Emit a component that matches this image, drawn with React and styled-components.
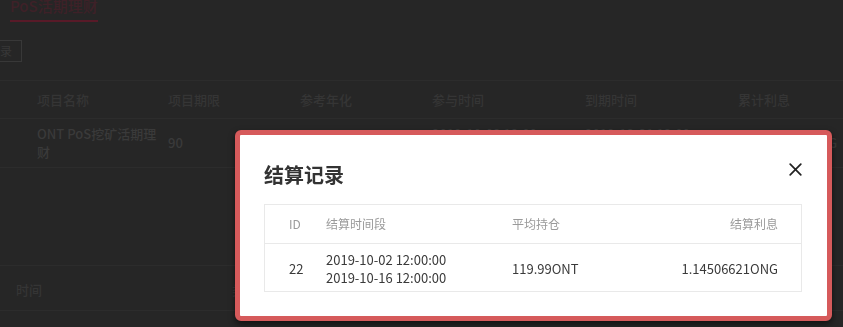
import React from "react";
import styled, { createGlobalStyle } from "styled-components";

const GlobalStyle = createGlobalStyle`
  html, body {
    margin: 0;
    padding: 0;
    background: #262626;
    overflow: hidden;
  }
  body {
    font-family: "Noto Sans CJK SC", "Noto Sans", sans-serif;
  }
`;

// dimmed page behind the dialog
const Page = styled.div`
  width: 843px;
  height: 327px;
  display: flex;
  flex-direction: column;
  background: #262626;
`;

const Title = styled.div`
  align-self: flex-start;
  margin: -3px 0 0 10px;
  padding-bottom: 5px;
  border-bottom: 2px solid #581a28;
  font-size: 15px;
  line-height: 18px;
  font-weight: 500;
  color: #3e2128;
`;

const RecordButton = styled.button`
  align-self: flex-start;
  margin: 18px 0 0 -22px;
  height: 22px;
  padding: 0 9px;
  border: 1px solid #383838;
  background: transparent;
  font-family: inherit;
  font-size: 12px;
  line-height: 20px;
  color: #383838;
`;

const Row = styled.div`
  display: grid;
  grid-template-columns: 152px 132px 132px 153px 153px 1fr;
  align-items: center;
  height: ${(p) => p.$h}px;
  border-top: ${(p) => (p.$top ? "1px solid #2c2c2c" : "none")};
  border-bottom: 1px solid #2c2c2c;
  margin-top: ${(p) => p.$mt || 0}px;
  font-size: 13px;
  line-height: 18px;
  font-weight: 500;
  color: ${(p) => (p.$head ? "#353535" : "#3a3a3a")};
`;

const Cell = styled.div`
  padding-left: 16px;
  white-space: nowrap;
  &:first-child {
    padding-left: 37px;
  }
`;

const HistoryRow = styled.div`
  display: flex;
  align-items: center;
  gap: 190px;
  height: 41px;
  margin-top: 97px;
  padding: 3px 0 0 16px;
  border-top: 1px solid #2c2c2c;
  border-bottom: 1px solid #2c2c2c;
  font-size: 13px;
  font-weight: 500;
  color: #353535;
`;

// dialog
const Dialog = styled.div`
  position: fixed;
  left: 235px;
  top: 130px;
  width: 597px;
  box-sizing: border-box;
  padding: 26px 25px 24px 24px;
  background: #fff;
  border: 5px solid #d65a5b;
  border-radius: 6px;
  box-shadow: 0 3px 6px rgba(0, 0, 0, 0.55);
`;

const DialogTitle = styled.h2`
  margin: 0 0 15px;
  font-size: 20px;
  line-height: 28px;
  font-weight: 700;
  color: #333;
`;

const CloseButton = styled.button`
  position: absolute;
  top: 28px;
  right: 25px;
  width: 13px;
  height: 13px;
  padding: 0;
  border: none;
  background: none;
  display: flex;
  cursor: pointer;
`;

const RecordTable = styled.div`
  border: 1px solid #e9e9e9;
`;

const RecordRow = styled.div`
  display: grid;
  grid-template-columns: 37px 186px 1fr auto;
  align-items: center;
  height: ${(p) => (p.$head ? 38 : 47)}px;
  padding: ${(p) => (p.$head ? "0 23px 0 24px" : "3px 23px 0 24px")};
  box-sizing: ${(p) => (p.$head ? "content-box" : "border-box")};
  border-bottom: ${(p) => (p.$head ? "1px solid #e9e9e9" : "none")};
  font-size: ${(p) => (p.$head ? 12 : 13)}px;
  line-height: 18px;
  color: ${(p) => (p.$head ? "#9a9a9a" : "#3a3a3a")};
`;

const Right = styled.div`
  text-align: right;
`;

const X = () => (
  <svg width="13" height="13" viewBox="0 0 13 13" fill="none">
    <path d="M1.2 1.2 L11.8 11.8 M11.8 1.2 L1.2 11.8" stroke="#222" strokeWidth="1.7" strokeLinecap="round" />
  </svg>
);

export default function App() {
  return (
    <>
      <GlobalStyle />
      <Page>
        <Title>PoS活期理财</Title>
        <RecordButton>记录</RecordButton>
        <Row $h={37} $top $head $mt={18}>
          <Cell>项目名称</Cell>
          <Cell>项目期限</Cell>
          <Cell>参考年化</Cell>
          <Cell>参与时间</Cell>
          <Cell>到期时间</Cell>
          <Cell>累计利息</Cell>
        </Row>
        <Row $h={48}>
          <Cell>
            ONT PoS挖矿活期理
            <br />财
          </Cell>
          <Cell>90</Cell>
          <Cell>5.00%</Cell>
          <Cell>
            2019-10-02 12:00
            <br />
            2019-10-16
          </Cell>
          <Cell>
            2019-12-31 12:00
            <br />
            2019-12-31
          </Cell>
          <Cell>1.14506621ONG</Cell>
        </Row>
        <HistoryRow>
          <span>时间</span>
          <span>类型</span>
        </HistoryRow>
      </Page>

      <Dialog>
        <CloseButton aria-label="关闭">
          <X />
        </CloseButton>
        <DialogTitle>结算记录</DialogTitle>
        <RecordTable>
          <RecordRow $head>
            <div>ID</div>
            <div>结算时间段</div>
            <div>平均持仓</div>
            <Right>结算利息</Right>
          </RecordRow>
          <RecordRow>
            <div>22</div>
            <div>
              2019-10-02 12:00:00
              <br />
              2019-10-16 12:00:00
            </div>
            <div>119.99ONT</div>
            <Right>1.14506621ONG</Right>
          </RecordRow>
        </RecordTable>
      </Dialog>
    </>
  );
}
